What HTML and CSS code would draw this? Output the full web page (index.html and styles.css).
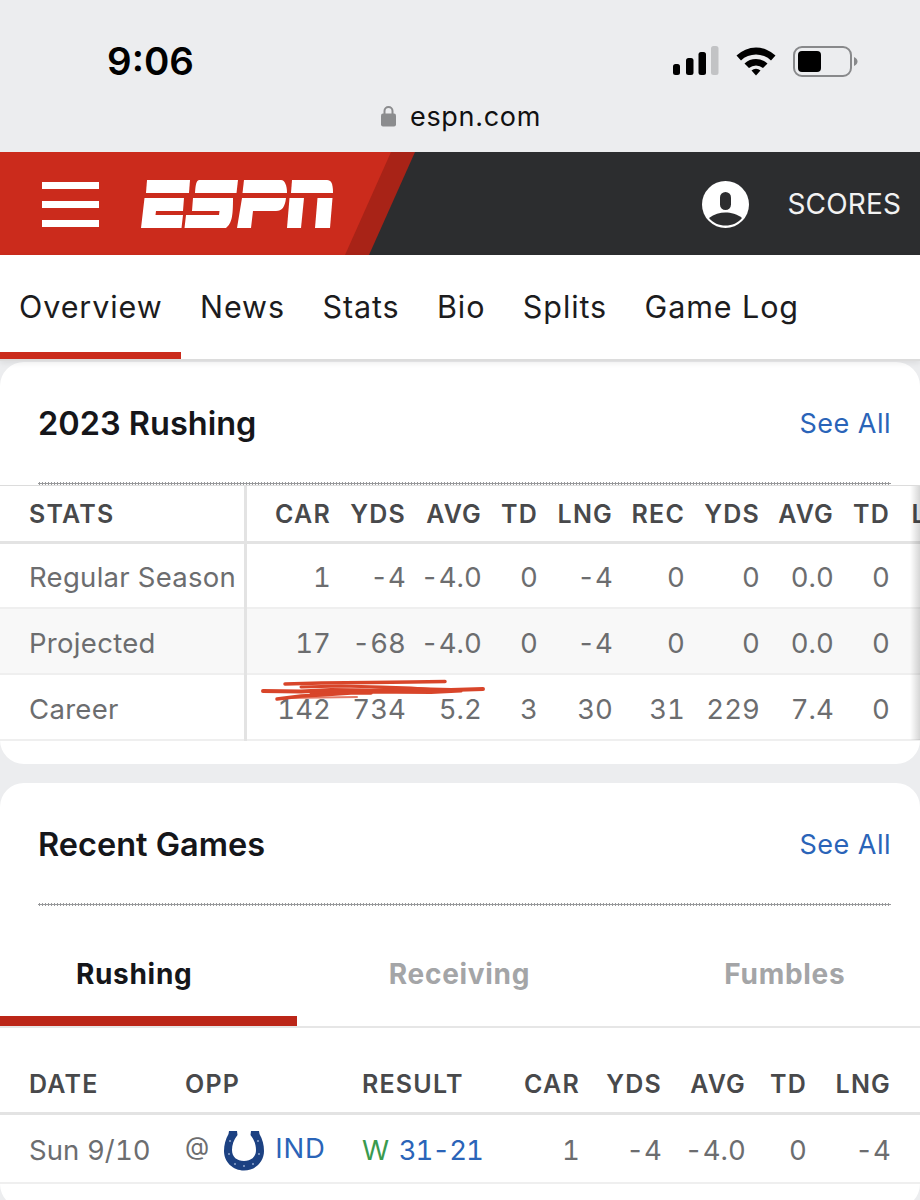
FILE: index.html
```html
<!DOCTYPE html>
<html lang="en">
<head>
  <meta charset="UTF-8" />
  <meta name="viewport" content="width=device-width, initial-scale=1.0" />
  <title>ESPN Player Overview</title>
  <link rel="stylesheet" href="styles.css">
</head>
<body>
  <div class="browser">
    <div class="status-row">
      <span class="time">9:06</span>
      <div class="status-icons">
        <svg class="signal" width="46" height="30" viewBox="0 0 46 30">
          <rect x="0" y="18" width="7" height="11" rx="2.5" fill="#000"/>
          <rect x="13" y="12" width="7.5" height="17" rx="2.5" fill="#000"/>
          <rect x="25.5" y="6" width="7.5" height="23" rx="2.5" fill="#000"/>
          <rect x="38" y="0" width="7.5" height="29" rx="2.5" fill="#c2c3c5"/>
        </svg>
        <svg class="wifi" width="40" height="30" viewBox="0 0 40 30">
          <path d="M0.5 9.5 A28 28 0 0 1 39.5 9.5 L35 14.5 A22 22 0 0 0 5 14.5 Z" fill="#000"/>
          <path d="M8.5 17.5 A17 17 0 0 1 31.5 17.5 L27 22 A11 11 0 0 0 13 22 Z" fill="#000"/>
          <path d="M15.5 24.5 A7 7 0 0 1 24.5 24.5 L20 29.5 Z" fill="#000"/>
        </svg>
        <svg class="battery" width="65" height="32" viewBox="0 0 65 32">
          <rect x="1" y="1" width="57" height="29" rx="8" fill="none" stroke="#88898b" stroke-width="2"/>
          <rect x="5" y="5" width="23" height="21" rx="4" fill="#000"/>
          <path d="M61 11 C63.5 12 64.5 14 64.5 15.5 C64.5 17 63.5 19 61 20 Z" fill="#88898b"/>
        </svg>
      </div>
    </div>
    <div class="url-row">
      <svg class="lock" width="15" height="22" viewBox="0 0 15 22">
        <path d="M3.5 9 V6 A4 4 0 0 1 11.5 6 V9" fill="none" stroke="#8b8c8e" stroke-width="2"/>
        <rect x="0" y="8.5" width="15" height="13" rx="2" fill="#8b8c8e"/>
      </svg>
      <span class="url">espn.com</span>
    </div>
  </div>

  <header class="topbar">
    <div class="brand">
      <div class="brand-inner">
        <div class="burger"><span></span><span></span><span></span></div>
        <svg class="logo" width="192" height="48" viewBox="0 0 192 48">
          <path fill="#fff" d="M6 0 H49 L48 13 H5 Z"/>
          <path fill="#fff" d="M3.5 18 H43 L42 31 H15 L14.5 35 H42 L40.5 48 H0 Z"/>
          <path fill="#fff" d="M58 0 H97 L95.5 13 H54 C54.5 5 55 1 58 0 Z"/>
          <path fill="#fff" d="M52 18 H92 C92 36 91 43 85 48 H43.5 L45 35 H78 L78.5 31 H51 Z"/>
          <path fill="#fff" d="M103 0 H140 C144 0 146 6 146 13 H101.5 Z"/>
          <path fill="#fff" d="M101 18 H145 C144 27 141 31 135 31 H112 L110 48 H96 Z"/>
          <path fill="#fff" d="M151 0 H186 C190 0 192 3 192 13 H150 Z"/>
          <path fill="#fff" d="M148.5 18 H163 L160 48 H146 Z"/>
          <path fill="#fff" d="M176.5 18 H191.5 L189 48 H174 Z"/>
        </svg>
      </div>
    </div>
    <div class="topbar-right">
      <svg class="account" width="47" height="47" viewBox="0 0 47 47">
        <circle cx="23.5" cy="23.5" r="23.5" fill="#fff"/>
        <rect x="18" y="11" width="11" height="18" rx="5.5" fill="#2c2d2f"/>
        <path d="M7 37 C12 33 18 31.5 23.5 31.5 C29 31.5 35 33 40 37 C36 42 30 44.5 23.5 44.5 C17 44.5 11 42 7 37 Z" fill="#2c2d2f"/>
      </svg>
      <span class="scores">SCORES</span>
    </div>
  </header>

  <nav class="subnav">
    <a class="active">Overview</a>
    <a>News</a>
    <a>Stats</a>
    <a>Bio</a>
    <a>Splits</a>
    <a>Game Log</a>
  </nav>

  <main>
    <section class="card">
      <div class="card-head">
        <h2>2023 Rushing</h2>
        <a class="see-all">See All</a>
      </div>
      <div class="dots"></div>
      <div class="table-wrap">
        <table class="stats">
          <thead>
            <tr><th>STATS</th><th>CAR</th><th>YDS</th><th>AVG</th><th>TD</th><th>LNG</th><th>REC</th><th>YDS</th><th>AVG</th><th>TD</th><th>LNG</th></tr>
          </thead>
          <tbody>
            <tr><td>Regular Season</td><td>1</td><td>-4</td><td>-4.0</td><td>0</td><td>-4</td><td>0</td><td>0</td><td>0.0</td><td>0</td><td></td></tr>
            <tr class="alt"><td>Projected</td><td>17</td><td>-68</td><td>-4.0</td><td>0</td><td>-4</td><td>0</td><td>0</td><td>0.0</td><td>0</td><td></td></tr>
            <tr><td>Career</td><td>142</td><td>734</td><td>5.2</td><td>3</td><td>30</td><td>31</td><td>229</td><td>7.4</td><td>0</td><td></td></tr>
          </tbody>
        </table>
        <div class="edge-shadow"></div>
        <!-- someone's red pen over the career numbers -->
        <svg class="scribble" width="230" height="30" viewBox="0 0 230 30">
          <g fill="none" stroke="#d8452a" stroke-linecap="round">
            <path d="M24 5 L60 4 L110 3.5 L150 3 L184 2.5" stroke-width="3.5"/>
            <path d="M2 12 L40 12.5 L70 11 L110 11.5 L150 10 L190 11 L222 10" stroke-width="4"/>
            <path d="M40 8 L80 7 L120 8 L150 9 L176 11" stroke-width="3"/>
            <path d="M50 14 L100 13 L170 13.5 L200 12" stroke-width="3"/>
            <path d="M16 20 L40 17 L60 16 L90 14 L110 14" stroke-width="3.5"/>
            <path d="M30 19 L60 18.5 L96 18" stroke-width="2" opacity=".7"/>
          </g>
        </svg>
      </div>
    </section>

    <section class="card card-games">
      <div class="card-head">
        <h2>Recent Games</h2>
        <a class="see-all">See All</a>
      </div>
      <div class="dots"></div>
      <div class="tabs">
        <a class="tab active">Rushing</a>
        <a class="tab">Receiving</a>
        <a class="tab">Fumbles</a>
      </div>
      <table class="games">
        <thead>
          <tr><th>DATE</th><th>OPP</th><th>RESULT</th><th>CAR</th><th>YDS</th><th>AVG</th><th>TD</th><th>LNG</th></tr>
        </thead>
        <tbody>
          <tr>
            <td>Sun 9/10</td>
            <td>
              <div class="opp">
                <span class="at">@</span>
                <svg class="horseshoe" width="40" height="42" viewBox="0 0 40 42">
                  <path d="M5 2 H13 L13.5 6 C9.5 11 8 16 8 21 C8 28 13 32 20 32 C27 32 32 28 32 21 C32 16 30.5 11 26.5 6 L27 2 H35 L35.5 5 C38.5 10 40 16 40 22 C40 33 31 41.5 20 41.5 C9 41.5 0 33 0 22 C0 16 1.5 10 4.5 5 Z" fill="#1c4182"/>
                  <g fill="#8fa6cc">
                    <circle cx="5" cy="25" r="1"/><circle cx="11" cy="35" r="1"/><circle cx="20" cy="37" r="1"/><circle cx="29" cy="35" r="1"/><circle cx="35" cy="25" r="1"/>
                    <circle cx="6" cy="12" r="1"/><circle cx="34" cy="12" r="1"/>
                  </g>
                </svg>
                <a class="link">IND</a>
              </div>
            </td>
            <td><span class="win">W</span> <a class="link score">31-21</a></td>
            <td>1</td><td>-4</td><td>-4.0</td><td>0</td><td>-4</td>
          </tr>
        </tbody>
      </table>
    </section>
  </main>
</body>
</html>
```
FILE: styles.css
```css
html, body {
  height: 1200px;
  overflow: hidden;
}

body {
  margin: 0;
  background-color: #ecedef;
  font-family: Inter, "Liberation Sans", sans-serif;
}

a {
  text-decoration: none;
}

/* PHONE CHROME */
.browser {
  height: 152px;
  background-color: #ecedef;
}

.status-row {
  height: 91px;
  padding: 0 62px 0 107px;
  display: flex;
  justify-content: space-between;
  align-items: flex-start;
}

.time {
  margin-top: 38px;
  font-size: 38.5px;
  line-height: 46px;
  font-weight: 600;
  color: #000;
}

.status-icons {
  margin-top: 46px;
  display: flex;
  gap: 17px;
}

.url-row {
  display: flex;
  justify-content: center;
  align-items: center;
  gap: 14px;
  height: 50px;
  padding-left: 2px;
}

.url {
  font-size: 27px;
  letter-spacing: 0.7px;
  color: #111;
}

/* TOP BAR */
.topbar {
  height: 103px;
  display: flex;
  justify-content: space-between;
  background-color: #2c2d2f;
}

.brand {
  width: 415px;
  background-color: #a82317;
  clip-path: polygon(0 0, 100% 0, 369px 100%, 0 100%);
}

.brand-inner {
  width: 391px;
  height: 100%;
  display: flex;
  align-items: center;
  gap: 42px;
  padding: 1px 0 0 42px;
  box-sizing: border-box;
  background-color: #cb2b1c;
  clip-path: polygon(0 0, 100% 0, 345px 100%, 0 100%);
}

.burger {
  display: flex;
  flex-direction: column;
  gap: 12px;
}

.burger span {
  display: block;
  width: 57px;
  height: 7px;
  background: #fff;
}

.topbar-right {
  display: flex;
  align-items: center;
  gap: 38px;
  padding: 1px 19px 0 0;
}

.scores {
  font-size: 28px;
  letter-spacing: 0.15px;
  color: #f2f2f2;
}

/* SUB NAV */
.subnav {
  position: relative;
  height: 104px;
  padding-left: 19px;
  display: flex;
  gap: 37.5px;
  background: #fff;
  border-bottom: 2px solid #dcdcdc;
  box-shadow: 0 2px 6px rgba(0, 0, 0, 0.08);
}

.subnav a {
  position: relative;
  line-height: 104px;
  font-size: 30.5px;
  letter-spacing: 0.9px;
  color: #1c1c1e;
}

.subnav a.active::after {
  content: "";
  position: absolute;
  left: -19px;
  right: -18px;
  bottom: 0;
  height: 7px;
  background: #cb2b1c;
}

/* CARDS */
.card {
  margin-top: 1px;
  background: #fff;
  border-radius: 24px;
  overflow: hidden;
}

.card-games {
  margin-top: 19px;
  padding-bottom: 24px;
}

.card-head {
  display: flex;
  justify-content: space-between;
  align-items: center;
  box-sizing: border-box;
  height: 120px;
  padding: 2px 29px 0 38px;
}

.card h2 {
  margin: 0;
  font-size: 32.5px;
  font-weight: 600;
  color: #15161a;
}

.see-all {
  font-size: 27px;
  letter-spacing: 0.5px;
  color: #2a64b8;
}

.dots {
  height: 3px;
  margin: 0 29px 0 38px;
  background-image: radial-gradient(circle, #98999b 1.2px, transparent 1.2px);
  background-size: 3px 3px;
}

/* TABLES */
.table-wrap {
  position: relative;
  overflow: hidden;
  height: 255px;
  margin-bottom: 23px;
  border-top: 1px solid #dcdcdc;
}

table {
  border-collapse: collapse;
  table-layout: fixed;
}

th {
  font-size: 25px;
  font-weight: 600;
  letter-spacing: 1.2px;
  color: #48494b;
  text-align: right;
  padding: 0;
}

td {
  font-size: 27.5px;
  letter-spacing: 0.1px;
  font-variant-numeric: tabular-nums;
  color: #6c6d6f;
  text-align: right;
  padding: 3px 0 0;
}

th:first-child, td:first-child {
  text-align: left;
  padding-left: 29px;
}

.stats {
  width: 967px;
}

.stats thead tr {
  height: 56px;
  border-bottom: 3px solid #e3e3e3;
}

.stats th {
  padding-top: 2px;
}

.stats tbody tr {
  height: 66px;
  border-bottom: 2px solid #efefef;
}

.stats tr.alt {
  background: #f8f8f8;
}

.stats th:first-child, .stats td:first-child {
  width: 215px;
  border-right: 3px solid #e3e3e3;
  letter-spacing: 0.3px;
}

.stats th:first-child {
  letter-spacing: 1.2px;
}

.stats th:nth-child(2) { width: 84px; }
.stats th:nth-child(3) { width: 75px; }
.stats th:nth-child(4) { width: 76px; }
.stats th:nth-child(5) { width: 56px; }
.stats th:nth-child(6) { width: 75px; }
.stats th:nth-child(7) { width: 72px; }
.stats th:nth-child(8) { width: 75px; }
.stats th:nth-child(9) { width: 74px; }
.stats th:nth-child(10) { width: 56px; }
.stats th:nth-child(11) { width: 77px; }

.edge-shadow {
  position: absolute;
  top: 0;
  right: 0;
  width: 10px;
  height: 254px;
  background: linear-gradient(to right, rgba(0, 0, 0, 0), rgba(0, 0, 0, 0.16));
}

.scribble {
  position: absolute;
  left: 261px;
  top: 193px;
}

/* RECENT GAMES */
.tabs {
  display: flex;
  gap: 57px;
  height: 120px;
  padding-right: 1px;
  border-bottom: 2px solid #e6e6e6;
}

.tab {
  position: relative;
  flex: 1;
  padding-top: 48px;
  text-align: center;
  line-height: 40px;
  font-size: 28px;
  font-weight: 700;
  letter-spacing: 0.7px;
  color: #a4a5a7;
}

.tab.active {
  color: #15161a;
}

.tab.active::after {
  content: "";
  position: absolute;
  left: 0;
  bottom: 0;
  width: 297px;
  height: 10px;
  background: #bb2618;
}

.games {
  width: 920px;
}

.games thead tr {
  height: 85px;
  border-bottom: 3px solid #e3e3e3;
}

.games tbody tr {
  height: 70px;
  border-bottom: 2px solid #efefef;
}

.games th {
  padding-top: 29px;
}

.games th:nth-child(1) { width: 156px; }
.games th:nth-child(2) { width: 177px; text-align: left; }
.games th:nth-child(3) { width: 156px; text-align: left; }
.games th:nth-child(4) { width: 62px; }
.games th:nth-child(5) { width: 82px; }
.games th:nth-child(6) { width: 84px; }
.games th:nth-child(7) { width: 61px; }
.games th:nth-child(8) { width: 84px; }

.games td:nth-child(3) {
  text-align: left;
}

.games td:last-child, .games th:last-child {
  padding-right: 29px;
}

.opp {
  display: flex;
  align-items: center;
  gap: 11px;
  text-align: left;
}

.at {
  margin-top: -8px;
  margin-right: 4px;
  font-size: 25px;
}

.link {
  color: #2a64b8;
}

.opp .link {
  margin-top: -4px;
  letter-spacing: 0.8px;
}

.score {
  letter-spacing: -1px;
}

.win {
  color: #3a9a4e;
  margin-right: 2px;
}
```
